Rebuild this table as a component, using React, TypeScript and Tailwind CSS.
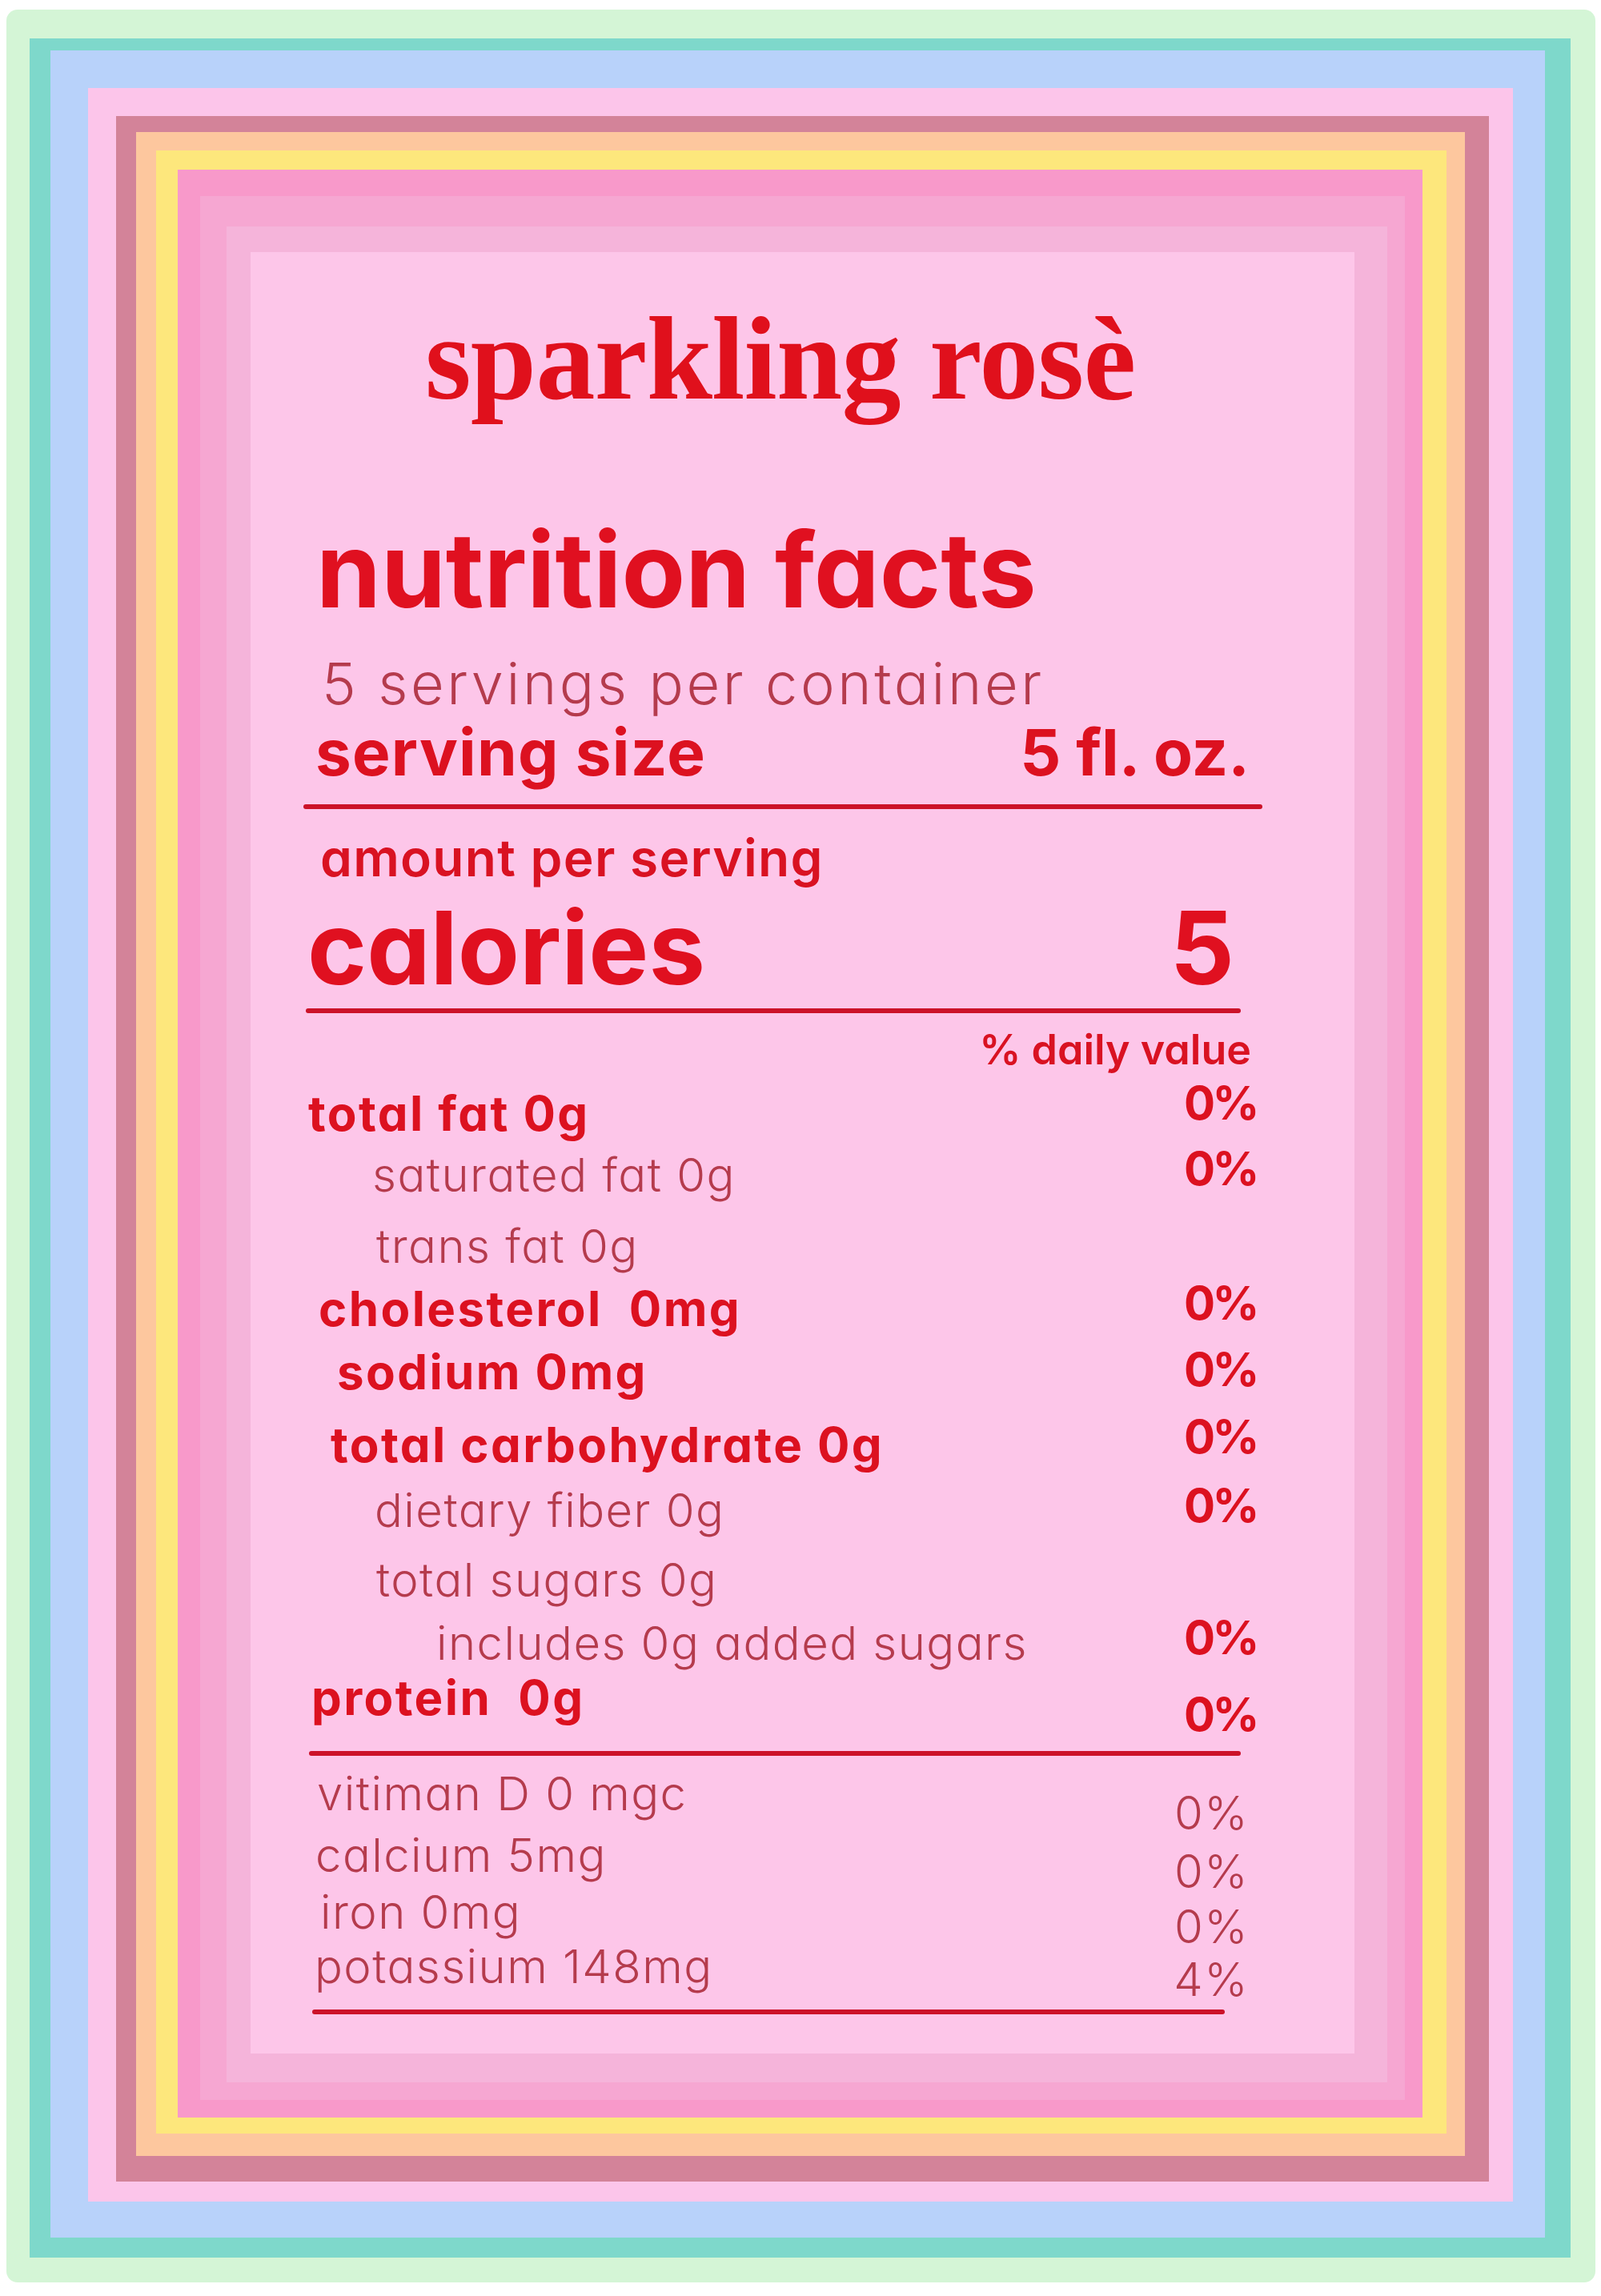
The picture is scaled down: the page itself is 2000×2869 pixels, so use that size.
import React from 'react';

const sans = "font-['Inter',sans-serif] [font-feature-settings:'cv11']";
const bold = "font-bold text-[60px] leading-none tracking-[0.04em] text-[#dc1120]";
const pct = "font-bold text-[58px] leading-none tracking-[-0.06em] text-[#dc1120]";
const light = "font-light text-[58px] leading-none tracking-[0.025em] text-[#b53b4d]";

function Rule({ className }: { className: string }) {
    return <div className={`h-[6px] bg-[#cc1229] rounded-full ${className}`} />;
}

export default function App() {
    return (
        <div className="bg-white w-[2000px] h-[2869px] pl-[8px] pt-[12px] pr-[7px] pb-[17px]">
            <div className="h-full bg-[#d4f5d6] rounded-[14px] pl-[29px] pt-[36px] pr-[31px] pb-[31px]">
                <div className="h-full bg-[#7ed8cb] pl-[26px] pt-[15px] pr-[32px] pb-[25px]">
                    <div className="h-full bg-[#b8d2fa] pl-[47px] pt-[47px] pr-[40px] pb-[45px]">
                        <div className="h-full bg-[#fcc5ea] pl-[35px] pt-[35px] pr-[30px] pb-[25px]">
                            <div className="h-full bg-[#d38399] pl-[25px] pt-[20px] pr-[30px] pb-[32px]">
                                <div className="h-full bg-[#fdc79e] pl-[25px] pt-[23px] pr-[23px] pb-[28px]">
                                    <div className="h-full bg-[#fde77c] pl-[27px] pt-[24px] pr-[30px] pb-[20px]">
                                        <div className="h-full bg-[#f899ca] pl-[28px] pt-[33px] pr-[22px] pb-[22px]">
                                            <div className="h-full bg-[#f6a7d2] pl-[33px] pt-[38px] pr-[22px] pb-[22px]">
                                                <div className="h-full bg-[#f5b4da] pl-[30px] pt-[32px] pr-[41px] pb-[36px]">
                                                    <div className={`h-full bg-[#fdc6e9] flex flex-col ${sans}`}>
                                                        <h1 className="ml-[218px] mt-[59px] font-['Liberation_Serif',serif] font-bold text-[148px] leading-none tracking-[-0.005em] text-[#e0101c]">
                                                            sparkling rosè
                                                        </h1>

                                                        <h2 className="ml-[82px] mt-[125px] text-[130px] font-bold leading-none text-[#e01020]">
                                                            nutrition facts
                                                        </h2>
                                                        <div className="ml-[89px] mt-[41px] text-[72px] font-light leading-none tracking-[0.05em] text-[#b53b4d]">
                                                            5 servings per container
                                                        </div>
                                                        <div className="ml-[81px] mr-[131px] mt-[10px] flex justify-between text-[80px] font-bold leading-none text-[#dc1120]">
                                                            <span className="tracking-[0.015em]">serving size</span>
                                                            <span>5 fl. oz.</span>
                                                        </div>
                                                        <Rule className="ml-[66px] mt-[25px] w-[1198px]" />

                                                        <div className="ml-[87px] mt-[29px] text-[64px] font-semibold leading-none tracking-[0.02em] text-[#d91222]">
                                                            amount per serving
                                                        </div>
                                                        <div className="ml-[71px] mr-[150px] mt-[17px] flex justify-between text-[126px] font-bold leading-none text-[#e01020]">
                                                            <span>calories</span>
                                                            <span>5</span>
                                                        </div>
                                                        <Rule className="ml-[69px] mt-[13px] w-[1168px]" />

                                                        <div className="self-end mr-[129px] mt-[20px] text-[52px] font-semibold leading-none text-[#d91222]">
                                                            % daily value
                                                        </div>

                                                        <div className="mt-[11px] ml-[72px] mr-[122px] flex justify-between items-start">
                                                            <span className={`${bold} mt-[12px]`}>total fat 0g</span>
                                                            <span className={pct}>0%</span>
                                                        </div>
                                                        <div className="mt-[10px] ml-[152px] mr-[122px] flex justify-between items-start">
                                                            <span className={`${light} mt-[8px]`}>saturated fat 0g</span>
                                                            <span className={pct}>0%</span>
                                                        </div>
                                                        <div className="mt-[31px] ml-[157px] flex">
                                                            <span className={light}>trans fat 0g</span>
                                                        </div>
                                                        <div className="mt-[13px] ml-[85px] mr-[122px] flex justify-between items-start">
                                                            <span className={`${bold} mt-[6px] whitespace-pre`}>cholesterol  0mg</span>
                                                            <span className={pct}>0%</span>
                                                        </div>
                                                        <div className="mt-[17px] ml-[108px] mr-[122px] flex justify-between items-start">
                                                            <span className={`${bold} mt-[2px]`}>sodium 0mg</span>
                                                            <span className={pct}>0%</span>
                                                        </div>
                                                        <div className="mt-[22px] ml-[100px] mr-[122px] flex justify-between items-start">
                                                            <span className={`${bold} mt-[9px]`}>total carbohydrate 0g</span>
                                                            <span className={pct}>0%</span>
                                                        </div>
                                                        <div className="mt-[17px] ml-[155px] mr-[122px] flex justify-between items-start">
                                                            <span className={`${light} mt-[6px] tracking-[0.01em]`}>dietary fiber 0g</span>
                                                            <span className={pct}>0%</span>
                                                        </div>
                                                        <div className="mt-[29px] ml-[157px] flex">
                                                            <span className={`${light} tracking-[0.01em]`}>total sugars 0g</span>
                                                        </div>
                                                        <div className="mt-[14px] ml-[232px] mr-[122px] flex justify-between items-start">
                                                            <span className={`${light} mt-[7px] tracking-[-0.025em]`}>includes 0g added sugars</span>
                                                            <span className={pct}>0%</span>
                                                        </div>
                                                        <div className="mt-[9px] ml-[76px] mr-[122px] flex justify-between items-start">
                                                            <span className={`${bold} whitespace-pre`}>protein  0g</span>
                                                            <span className={`${pct} mt-[22px]`}>0%</span>
                                                        </div>
                                                        <Rule className="ml-[73px] mt-[17px] w-[1164px]" />

                                                        <div className="mt-[18px] ml-[80px] mr-[132px] flex justify-between items-start">
                                                            <div className="flex flex-col">
                                                                <span className={`${light} ml-[3px] tracking-[-0.01em]`}>vitiman D 0 mgc</span>
                                                                <span className={`${light} ml-[1px] mt-[19px] tracking-[0.01em]`}>calcium 5mg</span>
                                                                <span className={`${light} ml-[7px] mt-[13px] tracking-[0.01em]`}>iron 0mg</span>
                                                                <span className={`${light} mt-[10px] tracking-[0.005em]`}>potassium 148mg</span>
                                                            </div>
                                                            <div className="flex flex-col items-end mt-[24px]">
                                                                <span className={`${light} tracking-[-0.02em]`}>0%</span>
                                                                <span className={`${light} mt-[15px] tracking-[-0.02em]`}>0%</span>
                                                                <span className={`${light} mt-[11px] tracking-[-0.02em]`}>0%</span>
                                                                <span className={`${light} mt-[8px] tracking-[-0.02em]`}>4%</span>
                                                            </div>
                                                        </div>
                                                        <Rule className="ml-[77px] mt-[9px] w-[1140px]" />
                                                    </div>
                                                </div>
                                            </div>
                                        </div>
                                    </div>
                                </div>
                            </div>
                        </div>
                    </div>
                </div>
            </div>
        </div>
    );
}
